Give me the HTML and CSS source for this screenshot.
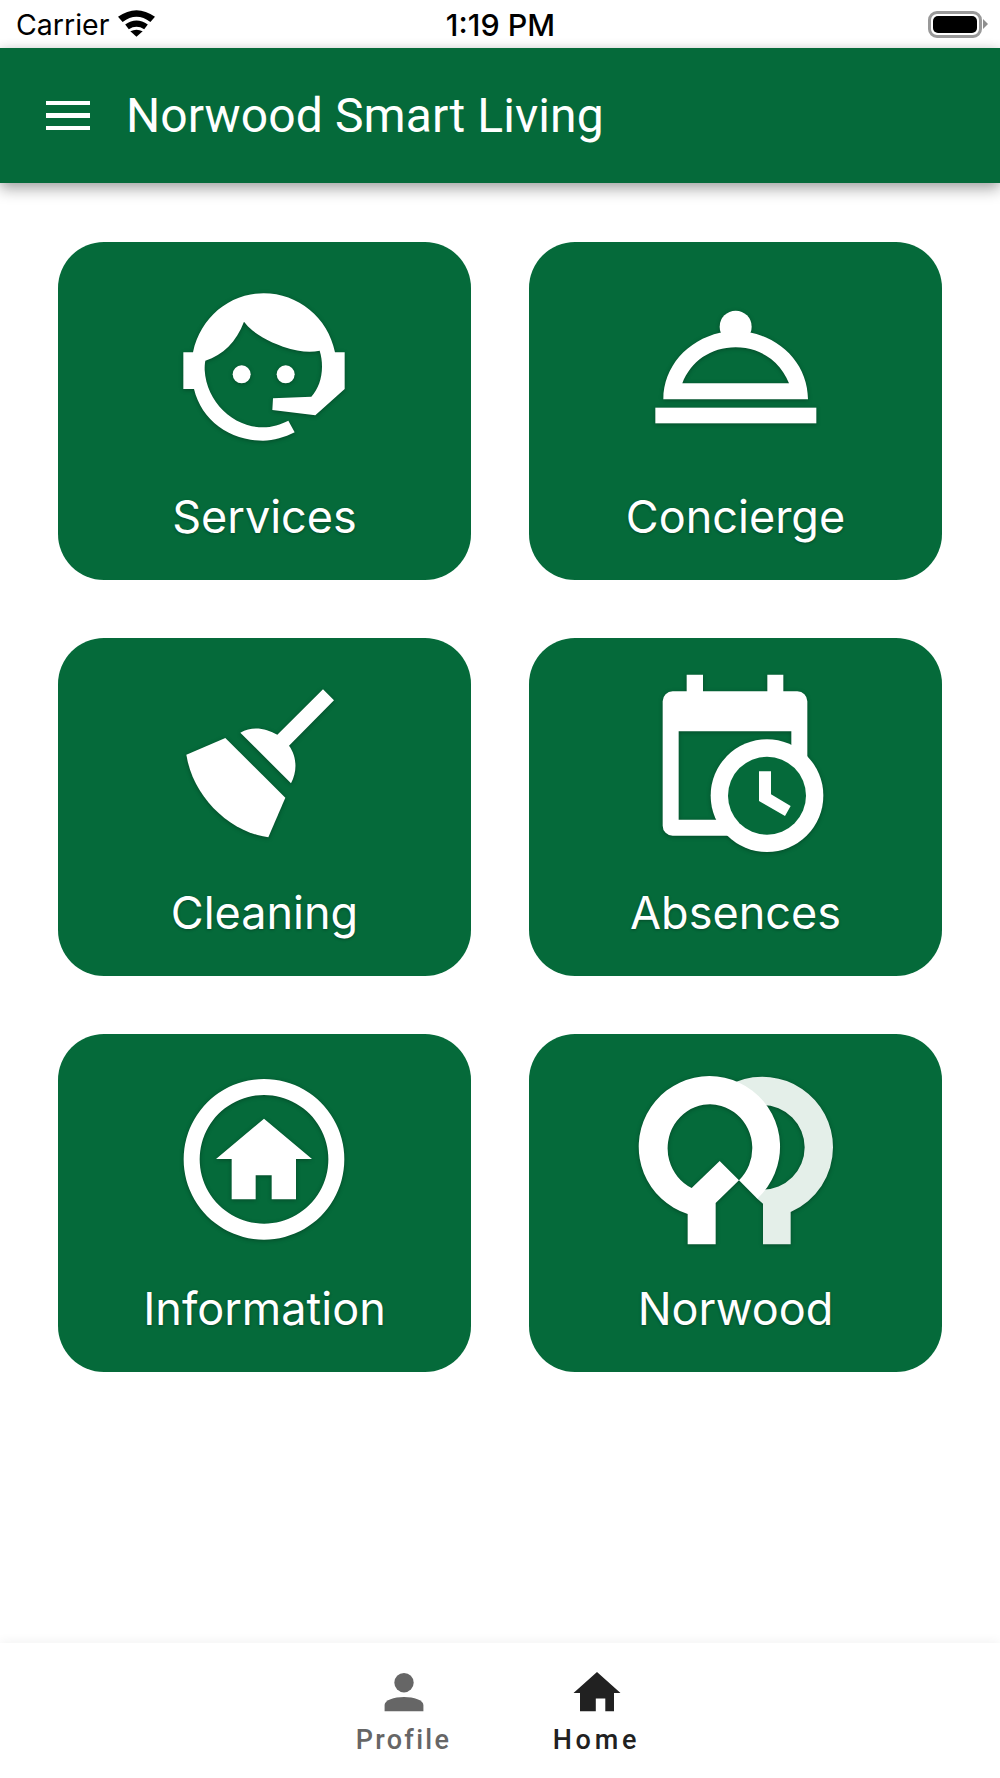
FILE: index.html
```html
<!DOCTYPE html>
<html lang="en">
<head>
  <meta charset="UTF-8" />
  <meta name="viewport" content="width=device-width, initial-scale=1.0"/>
  <title>Norwood Smart Living</title>
  <link rel="stylesheet" href="styles.css">
</head>
<body>
  <div class="status-bar">
    <div class="status-left">
      <span>Carrier</span>
      <svg class="wifi" viewBox="0 0 36 26">
        <path d="M0 6.5 Q18 -6.5 36 6.5 L31.5 11.5 Q18 1.5 4.5 11.5 Z"/>
        <path d="M7 14 Q18 6 29 14 L25.5 18.5 Q18 14 10.5 18.5 Z"/>
        <path d="M12 20.5 Q18 17.5 24 20.5 L18 26 Z"/>
      </svg>
    </div>
    <span class="clock">1:19 PM</span>
    <div class="status-right">
      <div class="battery"><div class="battery-fill"></div></div>
    </div>
  </div>

  <header class="app-bar">
    <div class="menu-icon"><span></span><span></span><span></span></div>
    <h1>Norwood Smart Living</h1>
  </header>

  <main class="grid">
    <a class="tile">
      <svg class="tile-icon" viewBox="358 123 576 576">
        <path d="M401 367 H430 C452 262 540 190 642 190 C745 190 835 262 856 367 H885 V477 L797 556 L668 540 L670 505 L785 500 C805 478 817 445 817 410 C817 393 815 378 810 362 C780 368 745 365 700 350 C650 332 610 310 583 275 C560 335 520 375 467 392 C465 402 465 410 465 420 C470 515 550 592 640 592 C665 592 695 583 716 572 L735 607 C705 622 672 632 640 632 C540 632 455 570 433 477 H401 Z"/>
        <circle cx="576" cy="433" r="27"/>
        <circle cx="708" cy="433" r="27"/>
      </svg>
      <span>Services</span>
    </a>
    <a class="tile">
      <svg class="tile-icon" viewBox="358 123 576 576">
        <circle cx="645" cy="290" r="48"/>
        <path fill-rule="evenodd" d="M428 508 C428 410 500 330 598 308 H692 C790 330 862 410 862 508 Z M485 460 H805 C780 395 720 352 645 352 C570 352 510 395 485 460 Z"/>
        <rect x="404" y="533" width="483" height="47"/>
      </svg>
      <span>Concierge</span>
    </a>
    <a class="tile">
      <svg class="tile-icon" viewBox="358 110 576 576">
        <path d="M820 177 L853 210 L718 346 C740 375 745 420 724 459 L572 307 C610 285 650 295 683 313 Z"/>
        <path d="M410 373 L527 323 L707 502 L656 621 C540 605 430 500 410 373 Z"/>
      </svg>
      <span>Cleaning</span>
    </a>
    <a class="tile">
      <svg class="tile-icon" viewBox="360 110 576 576">
        <path fill-rule="evenodd" d="M500 133 H549 V183 H742 V133 H790 V183 H832 A30 30 0 0 1 862 213 V586 A30 30 0 0 1 832 616 H458 A30 30 0 0 1 428 586 V213 A30 30 0 0 1 458 183 H500 Z M476 303 V568 H814 V303 Z"/>
        <circle cx="741" cy="496" r="169"/>
        <circle class="cut" cx="741" cy="496" r="117"/>
        <path d="M717 423 H753 V492 L812 527 L795 557 L717 512 Z"/>
      </svg>
      <span>Absences</span>
    </a>
    <a class="tile">
      <svg class="tile-icon" viewBox="358 100 576 576">
        <path fill-rule="evenodd" d="M643 148 A241 241 0 1 1 642.9 148 Z M643 196 A193 193 0 1 0 643.1 196 Z"/>
        <path d="M643 267 L787 388 H739 V509 H666 V437 H618 V509 H546 V388 H499 Z"/>
      </svg>
      <span>Information</span>
    </a>
    <a class="tile">
      <svg class="tile-icon" viewBox="361 100 576 576">
        <path class="pale" d="M640 170 L650 156 A212 212 0 0 1 940 353 A212 212 0 0 1 813 547 V644 H730 V522 L713 507 L700 480 H728 A127 127 0 0 0 855 353 A127 127 0 0 0 728 226 L700 200 Z"/>
        <path fill-rule="evenodd" d="M504 644 V553 A212 212 0 1 1 713 507 L658 452 L588 520 V644 Z M516 475 L600 394 L658 452 A127 132 0 1 0 516 475 Z"/>
      </svg>
      <span>Norwood</span>
    </a>
  </main>

  <nav class="tab-bar">
    <div class="tab">
      <svg class="tab-icon" viewBox="0 0 48 48">
        <circle cx="24" cy="13.7" r="9.7"/>
        <path d="M4.6 42.3 V36 C4.6 31 14 28 24 28 C34 28 43.4 31 43.4 36 V42.3 Z"/>
      </svg>
      <span>Profile</span>
    </div>
    <div class="tab active">
      <svg class="tab-icon" viewBox="0 0 48 48">
        <path d="M24 3 L47.5 24 H41 V42.3 H32.3 V29.5 H22.8 V42.3 H7 V24 H0.5 Z"/>
      </svg>
      <span>Home</span>
    </div>
  </nav>
</body>
</html>
```

FILE: styles.css
```css
:root {
  --green: #056a3a;
  --pale: #e4efe9;
}

* {
  box-sizing: border-box;
}

html, body {
  margin: 0;
  height: 100%;
}

body {
  display: flex;
  flex-direction: column;
  height: 1778px;
  background: #fff;
  font-family: Roboto, sans-serif;
  overflow: hidden;
}

/* ios status bar */
.status-bar {
  display: flex;
  align-items: center;
  height: 48px;
  padding: 0 13px 0 16px;
  color: #000;
  font-family: Inter, sans-serif;
  font-size: 28.5px;
  background: #fff;
}

.status-left {
  flex: 1;
  display: flex;
  align-items: center;
  gap: 9px;
}

.status-right {
  flex: 1;
  display: flex;
  justify-content: flex-end;
}

.wifi {
  width: 37px;
  height: 27px;
  margin-bottom: 2px;
}

.clock {
  padding: 1px 2px 0 0;
  font-size: 30.5px;
  font-weight: 500;
}

.battery {
  position: relative;
  width: 54px;
  height: 27px;
  margin-right: 5px;
  padding: 2px;
  border: 3px solid #999;
  border-radius: 9px;
}

.battery::after {
  content: "";
  position: absolute;
  right: -9px;
  top: 5px;
  border-left: 5px solid #8e8e8e;
  border-top: 5px solid transparent;
  border-bottom: 5px solid transparent;
}

.battery-fill {
  height: 100%;
  border-radius: 5px;
  background: #000;
}

/* app bar */
.app-bar {
  display: flex;
  align-items: center;
  gap: 36px;
  height: 135px;
  padding: 0 46px;
  background: var(--green);
  box-shadow: 0 6px 14px rgba(0, 0, 0, 0.33), 0 0 10px rgba(0, 0, 0, 0.08);
  color: #fff;
}

.app-bar h1 {
  margin: 0;
  font-size: 48px;
  font-weight: 400;
  letter-spacing: 0.1px;
}

.menu-icon {
  display: flex;
  flex-direction: column;
  gap: 8px;
  width: 44px;
}

.menu-icon span {
  height: 4.5px;
  background: #fff;
}

/* tiles */
.grid {
  flex: 1;
  display: grid;
  grid-template-columns: 1fr 1fr;
  grid-auto-rows: 338px;
  gap: 58px;
  padding: 59px 58px 0;
}

.tile {
  display: flex;
  flex-direction: column;
  align-items: center;
  padding-top: 29px;
  border-radius: 46px;
  background: var(--green);
  color: #fff;
}

.tile-icon {
  width: 192px;
  height: 192px;
  overflow: visible;
  fill: #fff;
  filter: drop-shadow(0 1px 2px rgba(0, 0, 0, 0.3));
}

.tile-icon .cut {
  fill: var(--green);
}

.tile-icon .pale {
  fill: var(--pale);
}

.tile span {
  margin-top: 26px;
  font-family: Inter, sans-serif;
  font-size: 45px;
  line-height: 56px;
  text-shadow: 0 1px 3px rgba(0, 0, 0, 0.3);
}

/* bottom tabs */
.tab-bar {
  display: flex;
  justify-content: center;
  height: 135px;
  padding-top: 26px;
  background: #fff;
  box-shadow: 0 -2px 10px rgba(0, 0, 0, 0.05);
}

.tab {
  display: flex;
  flex-direction: column;
  align-items: center;
  width: 193px;
  color: #666;
  fill: #666;
}

.tab.active {
  color: #212121;
  fill: #212121;
}

.tab-icon {
  width: 48px;
  height: 48px;
}

.tab span {
  margin-top: 6px;
  font-size: 27px;
  font-weight: 500;
  line-height: 34px;
  letter-spacing: 2.3px;
}

.tab.active span {
  letter-spacing: 3.8px;
}
```
